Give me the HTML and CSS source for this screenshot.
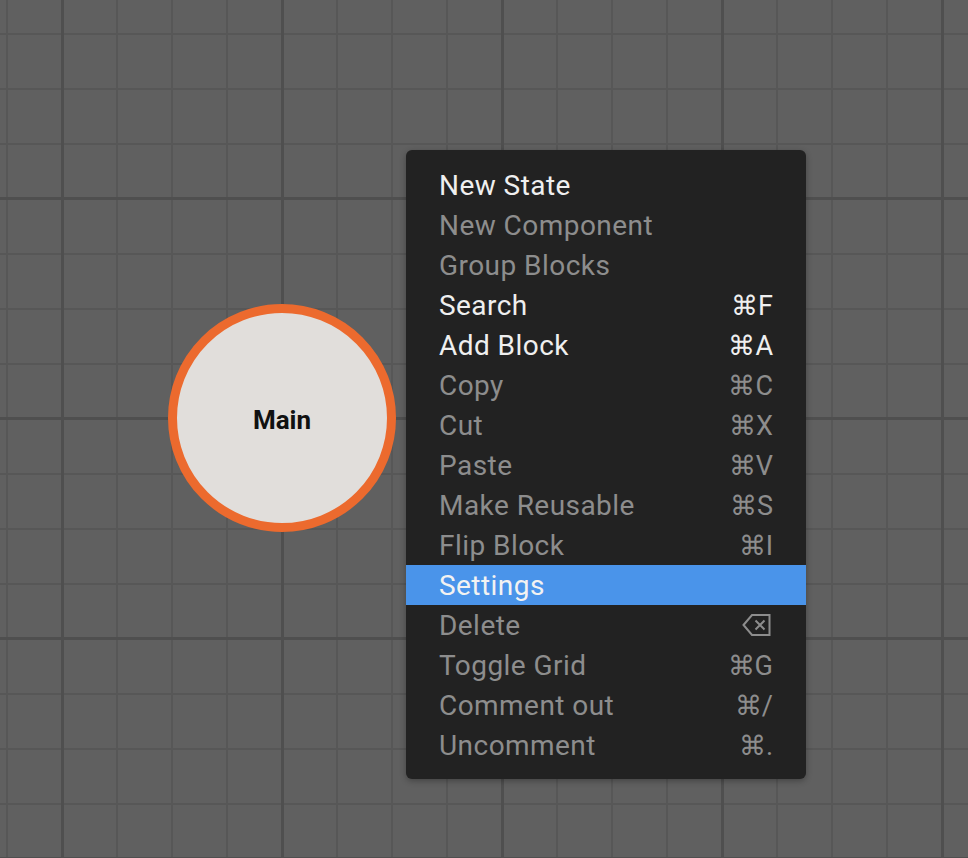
FILE: index.html
```html
<!DOCTYPE html>
<html lang="en">
<head>
<meta charset="utf-8">
<title>Canvas</title>
<link rel="stylesheet" href="styles.css">
</head>
<body>
<div class="canvas">
  <div class="node"><span class="node-label">Main</span></div>
  <ul class="menu">
    <li class="item"><span class="label">New State</span></li>
    <li class="item disabled"><span class="label">New Component</span></li>
    <li class="item disabled"><span class="label">Group Blocks</span></li>
    <li class="item"><span class="label">Search</span><span class="key">⌘F</span></li>
    <li class="item"><span class="label">Add Block</span><span class="key">⌘A</span></li>
    <li class="item disabled"><span class="label">Copy</span><span class="key">⌘C</span></li>
    <li class="item disabled"><span class="label">Cut</span><span class="key">⌘X</span></li>
    <li class="item disabled"><span class="label">Paste</span><span class="key">⌘V</span></li>
    <li class="item disabled"><span class="label">Make Reusable</span><span class="key">⌘S</span></li>
    <li class="item disabled"><span class="label">Flip Block</span><span class="key">⌘I</span></li>
    <li class="item active"><span class="label">Settings</span></li>
    <li class="item disabled"><span class="label">Delete</span><span class="key">
      <svg class="del-icon" width="29" height="24" viewBox="0 0 29 24"><path d="M1.5 12 L10 2 H27.5 V22 H10 Z" fill="none" stroke="currentColor" stroke-width="2" stroke-linejoin="miter"/><path d="M13.5 7.5 L22.5 16.5 M22.5 7.5 L13.5 16.5" stroke="currentColor" stroke-width="2"/></svg>
    </span></li>
    <li class="item disabled"><span class="label">Toggle Grid</span><span class="key">⌘G</span></li>
    <li class="item disabled"><span class="label">Comment out</span><span class="key">⌘/</span></li>
    <li class="item disabled"><span class="label">Uncomment</span><span class="key">⌘.</span></li>
  </ul>
</div>
</body>
</html>
```

FILE: styles.css
```css
html, body {
  margin: 0;
  padding: 0;
  width: 968px;
  height: 858px;
  overflow: hidden;
}

body {
  background-color: #606060;
  background-image:
    linear-gradient(to right, #4f4f4f 3px, transparent 3px),
    linear-gradient(to bottom, #4f4f4f 3px, transparent 3px),
    linear-gradient(to right, #575757 2px, transparent 2px),
    linear-gradient(to bottom, #575757 2px, transparent 2px);
  background-size: 220px 220px, 220px 220px, 55px 55px, 55px 55px;
  background-position: 61px 0, 0 197px, 6px 0, 0 33px;
  font-family: Roboto, "Liberation Sans", sans-serif;
}

.canvas {
  position: relative;
  width: 968px;
  height: 858px;
}

.node {
  position: absolute;
  left: 168px;
  top: 304px;
  width: 228px;
  height: 228px;
  box-sizing: border-box;
  border: 9px solid #ec6a2e;
  border-radius: 50%;
  background: #e1dedb;
  display: flex;
  align-items: center;
  justify-content: center;
}

.node-label {
  font-weight: 700;
  font-size: 26px;
  color: #111111;
  padding-top: 3px;
}

.menu {
  position: absolute;
  left: 406px;
  top: 150px;
  width: 400px;
  margin: 0;
  padding: 15px 0 14px;
  list-style: none;
  background: #222222;
  border-radius: 6px;
  box-shadow: 0 2px 6px rgba(0, 0, 0, 0.3);
}

.item {
  height: 40px;
  box-sizing: border-box;
  padding: 1px 33px 0;
  display: flex;
  align-items: center;
  justify-content: space-between;
  font-size: 28px;
  letter-spacing: 0.45px;
  color: #efefef;
}

.item.disabled {
  color: #8d8d8d;
}

.item.active {
  background: #4a94ea;
  color: #f2f2f2;
}

.key {
  display: flex;
  align-items: center;
  letter-spacing: 0;
  font-size: 27px;
}

.del-icon {
  display: block;
  margin-right: 2px;
  margin-top: -1px;
}
```
